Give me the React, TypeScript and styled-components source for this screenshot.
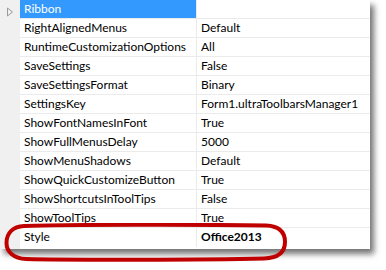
import styled, { createGlobalStyle } from "styled-components";

const GlobalStyle = createGlobalStyle`
  html, body {
    margin: 0;
    padding: 0;
    background: #ffffff;
  }
`;

const rows: { name: string; value: string; selected?: boolean; bold?: boolean }[] = [
  { name: "Ribbon", value: "", selected: true },
  { name: "RightAlignedMenus", value: "Default" },
  { name: "RuntimeCustomizationOptions", value: "All" },
  { name: "SaveSettings", value: "False" },
  { name: "SaveSettingsFormat", value: "Binary" },
  { name: "SettingsKey", value: "Form1.ultraToolbarsManager1" },
  { name: "ShowFontNamesInFont", value: "True" },
  { name: "ShowFullMenusDelay", value: "5000" },
  { name: "ShowMenuShadows", value: "Default" },
  { name: "ShowQuickCustomizeButton", value: "True" },
  { name: "ShowShortcutsInToolTips", value: "False" },
  { name: "ShowToolTips", value: "True" },
  { name: "Style", value: "Office2013", bold: true },
];

const Page = () => {
  return (
    <Stage>
      <Panel>
        <Gutter>
          <svg width="8" height="10" viewBox="0 0 8 10">
            <path d="M1.5 1 L6.5 5 L1.5 9 Z" fill="none" stroke="#9a9a9a" strokeWidth="1" />
          </svg>
        </Gutter>
        <Grid>
          {rows.map((r) => (
            <Row key={r.name}>
              <NameCell $selected={r.selected}>{r.name}</NameCell>
              <ValueCell $bold={r.bold}>{r.value}</ValueCell>
            </Row>
          ))}
        </Grid>
      </Panel>
      <Callout width="284" height="40" viewBox="0 0 284 40">
        <path
          d="M20 3 C60 1.5 200 1.5 262 2.5 C276 3 281 10 281 19 C281 29 274 35 260 35.5 C200 37 60 37 22 36 C10 35.5 2.5 29 2.5 20 C2.5 10 9 3.5 20 3 Z"
          fill="none"
          stroke="#c00000"
          strokeWidth="4"
        />
      </Callout>
    </Stage>
  );
};

export default function App() {
  return (
    <>
      <GlobalStyle />
      <Page />
    </>
  );
}

const Stage = styled.div`
  position: relative;
  width: 386px;
  height: 270px;
  overflow: hidden;
  background: #ffffff;
  font-family: Lato, "Noto Sans", sans-serif;
  font-size: 12px;
  color: #000000;
`;

const Panel = styled.div`
  display: flex;
  width: 370px;
  height: 249px;
  background: #ffffff;
  box-shadow: 4px 5px 6px rgba(0, 0, 0, 0.55);
`;

const Gutter = styled.div`
  width: 20px;
  flex-shrink: 0;
  background: #f0f0f0;
  display: flex;
  justify-content: center;
  align-items: flex-start;
  padding-top: 7px;
  box-sizing: border-box;
`;

const Grid = styled.div`
  flex: 1;
  display: flex;
  flex-direction: column;
`;

const Row = styled.div`
  display: grid;
  grid-template-columns: 177px 1fr;
  height: 19px;
  box-sizing: border-box;
  border-bottom: 1px solid #ebebeb;

  &:last-child {
    border-bottom: none;
  }
`;

const NameCell = styled.div<{ $selected?: boolean }>`
  padding-left: 4px;
  line-height: 18px;
  white-space: nowrap;
  overflow: hidden;
  border-right: 1px solid #ebebeb;
  background: ${(p) => (p.$selected ? "#3399ff" : "transparent")};
  color: ${(p) => (p.$selected ? "#ffffff" : "#000000")};
`;

const ValueCell = styled.div<{ $bold?: boolean }>`
  padding-left: 4px;
  line-height: 18px;
  white-space: nowrap;
  overflow: hidden;
  font-weight: ${(p) => (p.$bold ? 700 : 400)};
`;

const Callout = styled.svg`
  position: absolute;
  left: 4px;
  top: 223px;
`;
